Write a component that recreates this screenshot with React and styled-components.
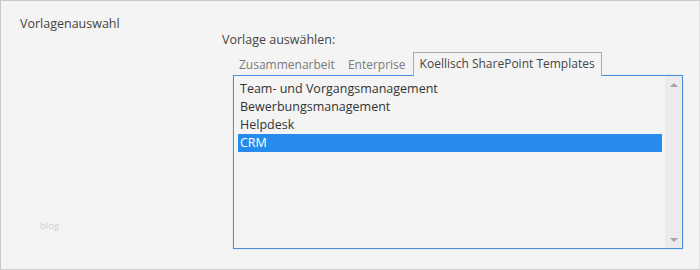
import React from 'react';
import styled, { createGlobalStyle } from 'styled-components';

const Global = createGlobalStyle`
  body {
    margin: 0;
    background: #fff;
    font-family: "Open Sans", "Noto Sans", sans-serif;
  }
`;

const Frame = styled.div`
  width: 700px;
  height: 270px;
  box-sizing: border-box;
  border: 1px solid #c9c9c9;
  border-right-color: #e4e4e4;
  background: #f4f4f4;
  display: flex;
  color: #444;
  font-size: 12px;
`;

const Side = styled.div`
  width: 221px;
  display: flex;
  flex-direction: column;
  padding: 14px 0 37px 19px;
  box-sizing: border-box;
`;

const SectionTitle = styled.div`
  font-size: 12.5px;
  line-height: 18px;
`;

const Watermark = styled.div`
  margin-top: auto;
  margin-left: 20px;
  font-size: 9.5px;
  color: #cfcfcf;
`;

const Main = styled.div`
  padding-top: 30px;
  display: flex;
  flex-direction: column;
`;

const FieldLabel = styled.div`
  font-size: 12.5px;
  line-height: 18px;
  margin-bottom: 3px;
`;

const Picker = styled.div`
  margin-left: 11px;
  display: flex;
  flex-direction: column;
`;

const TabRow = styled.div`
  display: flex;
  align-items: flex-end;
  gap: 1px;
  height: 23px;
`;

const Tab = styled.div`
  position: relative;
  z-index: 1;
  height: ${p => (p.$active ? '24px' : '22px')};
  margin-bottom: ${p => (p.$active ? '-1px' : '0')};
  box-sizing: border-box;
  padding: 0 ${p => (p.$active ? '6px' : '5px')};
  border: 1px solid ${p => (p.$active ? '#ababab' : 'transparent')};
  border-bottom: none;
  background: #f4f4f4;
  color: ${p => (p.$active ? '#444' : '#7a7a7a')};
  font-size: 12px;
  line-height: ${p => (p.$active ? '22px' : '21px')};
  white-space: nowrap;
`;

const ListBox = styled.div`
  width: 450px;
  height: 174px;
  box-sizing: border-box;
  border: 1px solid #4a8ee0;
  box-shadow: 0 0 1px #9fc4f0;
  display: flex;
  background: #f4f4f4;
`;

const Items = styled.div`
  flex: 1;
  padding: 4px 3px 4px 4px;
`;

const Item = styled.div`
  height: 18px;
  line-height: 18px;
  padding-left: 2px;
  font-size: 12.5px;
  color: ${p => (p.$selected ? '#fff' : '#333')};
  background: ${p => (p.$selected ? '#268bec' : 'transparent')};
`;

const ScrollTrack = styled.div`
  width: 17px;
  background: #ebebeb;
  display: flex;
  flex-direction: column;
  justify-content: space-between;
  align-items: center;
  padding: 7px 0 6px;
  box-sizing: border-box;
`;

const Arrow = styled.div`
  width: 0;
  height: 0;
  border-left: 4px solid transparent;
  border-right: 4px solid transparent;
  ${p => (p.$down
    ? 'border-top: 4px solid #a4a4a4;'
    : 'border-bottom: 4px solid #a4a4a4;')}
`;

const tabs = ['Zusammenarbeit', 'Enterprise', 'Koellisch SharePoint Templates'];
const templates = ['Team- und Vorgangsmanagement', 'Bewerbungsmanagement', 'Helpdesk', 'CRM'];

export default function App() {
  return (
    <>
      <Global />
      <Frame>
        <Side>
          <SectionTitle>Vorlagenauswahl</SectionTitle>
          <Watermark>blog</Watermark>
        </Side>
        <Main>
          <FieldLabel>Vorlage auswählen:</FieldLabel>
          <Picker>
            <TabRow>
              {tabs.map((t, i) => (
                <Tab key={t} $active={i === 2}>{t}</Tab>
              ))}
            </TabRow>
            <ListBox>
              <Items>
                {templates.map(t => (
                  <Item key={t} $selected={t === 'CRM'}>{t}</Item>
                ))}
              </Items>
              <ScrollTrack>
                <Arrow />
                <Arrow $down />
              </ScrollTrack>
            </ListBox>
          </Picker>
        </Main>
      </Frame>
    </>
  );
}
